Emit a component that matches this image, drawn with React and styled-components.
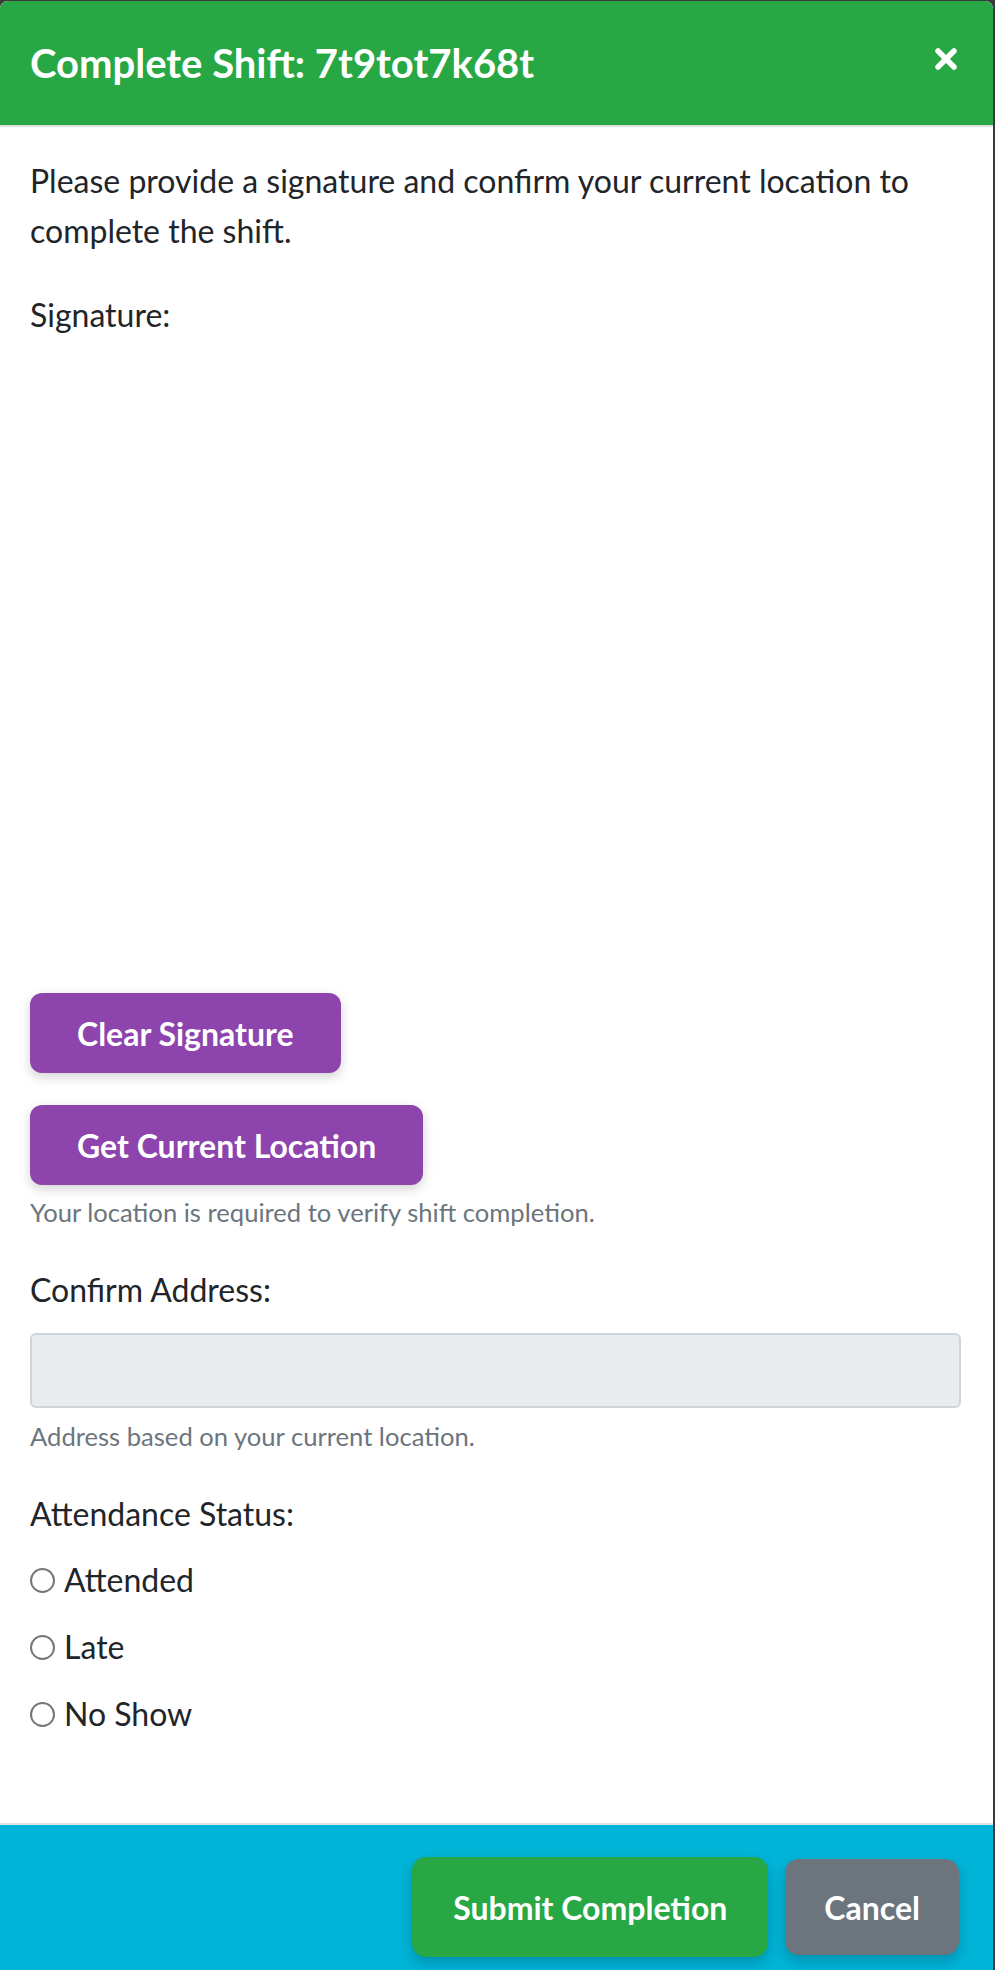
import React from "react";
import styled, { createGlobalStyle } from "styled-components";

const Global = createGlobalStyle`
  html, body { margin: 0; padding: 0; }
  body {
    background: #3a3a3a;
    font-family: Lato, "Open Sans", Arial, sans-serif;
    color: #212529;
  }
  * { box-sizing: border-box; }
`;

const Modal = styled.div`
  margin-top: 1px;
  width: 993px;
  min-height: 1969px;
  background: #fff;
  border-top-right-radius: 8px;
  border-top-left-radius: 8px;
  overflow: hidden;
  display: flex;
  flex-direction: column;
`;

const Header = styled.header`
  height: 126px;
  background: #28a745;
  border-bottom: 2px solid #dee2e6;
  padding: 0 34px 0 30px;
  display: flex;
  align-items: center;
  justify-content: space-between;
`;

const Title = styled.h2`
  margin: 0;
  font-size: 40px;
  font-weight: 700;
  color: #fff;
  line-height: 1.2;
`;

const CloseButton = styled.button`
  border: 0;
  background: transparent;
  padding: 0;
  width: 26px;
  height: 26px;
  display: flex;
  align-items: center;
  justify-content: center;
  margin-top: -8px;
  cursor: pointer;
`;

const Body = styled.main`
  padding: 29px 30px 0 30px;
  display: flex;
  flex-direction: column;
  align-items: flex-start;
`;

const Text = styled.p`
  margin: 0;
  font-size: 32px;
  line-height: 50px;
`;

const Label = styled.div`
  font-size: 32px;
  line-height: 50px;
  margin-top: ${(p) => p.$mt || 0}px;
`;

const SignaturePad = styled.canvas`
  display: block;
  width: 933px;
  height: 621px;
  margin: 16px 0;
  background: #fff;
`;

const PurpleButton = styled.button`
  height: 80px;
  padding: 0 47px;
  border: 0;
  border-radius: 12px;
  background: #8e44ad;
  color: #fff;
  font-family: inherit;
  font-size: 32px;
  font-weight: 700;
  box-shadow: 0 4px 12px rgba(0, 0, 0, 0.18);
  margin-top: ${(p) => p.$mt || 0}px;
  cursor: pointer;
`;

const Help = styled.small`
  display: block;
  margin-top: ${(p) => p.$mt || 0}px;
  font-size: 25.6px;
  line-height: 38px;
  color: #6c757d;
`;

const AddressInput = styled.input`
  display: block;
  width: 931px;
  height: 75px;
  margin-top: 18px;
  background: #e9ecef;
  border: 2px solid #ced4da;
  border-radius: 6px;
  font-family: inherit;
  font-size: 32px;
  padding: 0 16px;
`;

const RadioGroup = styled.div`
  display: flex;
  flex-direction: column;
  gap: 17px;
  margin-top: 16px;
`;

const RadioRow = styled.label`
  display: flex;
  align-items: center;
  gap: 9px;
  font-size: 32px;
  line-height: 50px;
`;

const RadioCircle = styled.input.attrs({ type: "radio" })`
  appearance: none;
  margin: 0;
  width: 25px;
  height: 25px;
  border: 2px solid #767676;
  border-radius: 50%;
  background: #fff;
`;

const Footer = styled.footer`
  margin-top: 84px;
  flex: 1;
  background: #00b4d8;
  border-top: 2px solid #dee2e6;
  padding: 32px 34px 0 0;
  display: flex;
  justify-content: flex-end;
  align-items: flex-start;
  gap: 17px;
`;

const FooterButton = styled.button`
  height: ${(p) => p.$h}px;
  margin-top: ${(p) => p.$mt || 0}px;
  padding: 0 ${(p) => p.$px}px;
  border: 0;
  border-radius: 14px;
  background: ${(p) => p.$bg};
  color: #fff;
  font-family: inherit;
  font-size: 32px;
  font-weight: 700;
  box-shadow: 0 6px 14px rgba(0, 0, 0, 0.2);
  cursor: pointer;
`;

export default function App() {
  return (
    <>
      <Global />
      <Modal>
        <Header>
          <Title>Complete Shift: 7t9tot7k68t</Title>
          <CloseButton aria-label="Close">
            <svg width="24" height="24" viewBox="0 0 24 24">
              <path d="M4 4 L20 20 M20 4 L4 20" stroke="#fff" strokeWidth="5.5" strokeLinecap="round" />
            </svg>
          </CloseButton>
        </Header>
        <Body>
          <Text>
            Please provide a signature and confirm your current location to complete the shift.
          </Text>
          <Label $mt={34}>Signature:</Label>
          <SignaturePad width={933} height={621} />
          <PurpleButton>Clear Signature</PurpleButton>
          <PurpleButton $mt={32}>Get Current Location</PurpleButton>
          <Help $mt={8}>Your location is required to verify shift completion.</Help>
          <Label $mt={34}>Confirm Address:</Label>
          <AddressInput readOnly value="" />
          <Help $mt={9}>Address based on your current location.</Help>
          <Label $mt={34}>Attendance Status:</Label>
          <RadioGroup>
            <RadioRow><RadioCircle name="att" />Attended</RadioRow>
            <RadioRow><RadioCircle name="att" />Late</RadioRow>
            <RadioRow><RadioCircle name="att" />No Show</RadioRow>
          </RadioGroup>
        </Body>
        <Footer>
          <FooterButton $bg="#28a745" $h={100} $px={41}>Submit Completion</FooterButton>
          <FooterButton $bg="#6c757d" $h={96} $mt={2} $px={39}>Cancel</FooterButton>
        </Footer>
      </Modal>
    </>
  );
}
